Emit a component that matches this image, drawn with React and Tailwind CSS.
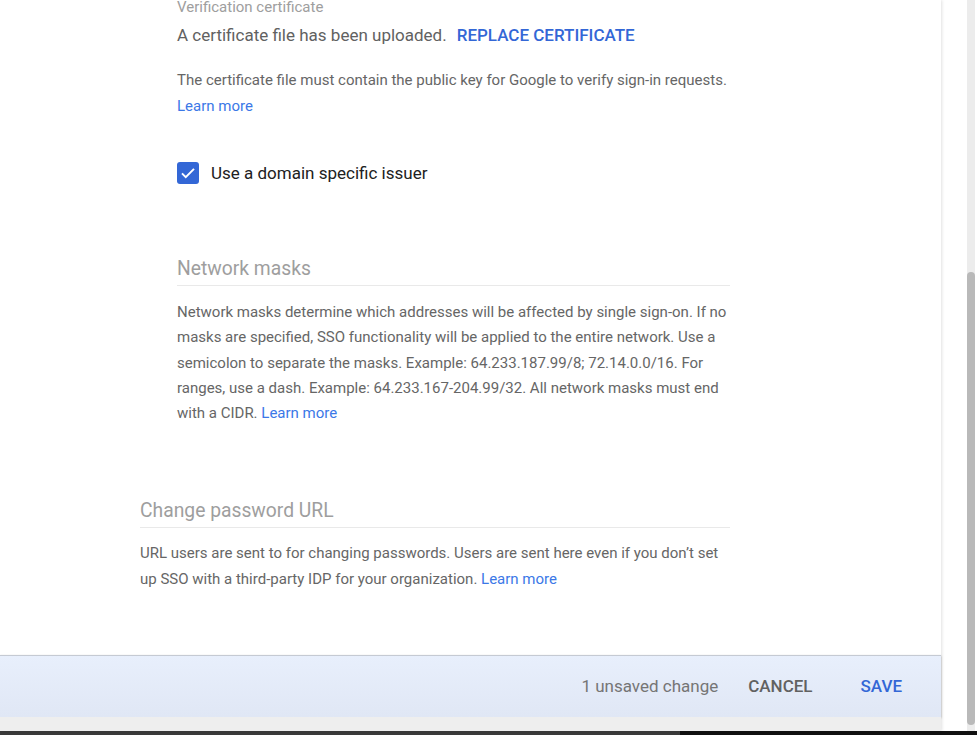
export default function App() {
	return (
		<div className="w-[977px] h-[735px] overflow-hidden bg-white flex flex-col font-['Roboto',sans-serif]">
			<div className="flex flex-1 min-h-0">
				{/* Settings card */}
				<div className="w-[941px] flex flex-col shadow-[1px_0_3px_rgba(0,0,0,0.12)] z-10">
					<div className="flex-1 min-h-0 pl-[140px]">
						<div className="w-[590px]">
							<div className="pl-[37px]">
								<div className="mt-[-3px] text-[15px] leading-[20px] text-[#9e9e9e]">Verification certificate</div>
								<div className="mt-[6px] text-[17px] leading-[24px] text-[#616161]">
									A certificate file has been uploaded.
									<span className="ml-[10px] font-medium text-[#3367d6]">REPLACE CERTIFICATE</span>
								</div>
								<p className="mt-[20px] text-[15px] leading-[26px] text-[#666666]">
									The certificate file must contain the public key for Google to verify sign-in requests.
									<br />
									<span className="text-[#3b78e7]">Learn more</span>
								</p>

								<div className="mt-[42px] flex items-center gap-[12px]">
									<div className="w-[22px] h-[22px] rounded-[3px] bg-[#3367d6] flex items-center justify-center">
										<svg width="18" height="18" viewBox="0 0 24 24" fill="none">
											<path d="M4 12.5l5 5L20 6.5" stroke="white" strokeWidth="2.6" />
										</svg>
									</div>
									<span className="text-[17px] leading-[24px] text-[#212121]">Use a domain specific issuer</span>
								</div>

								{/* Network masks */}
								<div className="mt-[72px] pb-[4px] border-b border-[#e9e9e9] text-[19.3px] leading-[24px] text-[#9e9e9e]">
									Network masks
								</div>
								<p className="mt-[14px] text-[15px] leading-[25.3px] text-[#666666]">
									Network masks determine which addresses will be affected by single sign-on. If no masks are
									specified, SSO functionality will be applied to the entire network. Use a semicolon to separate
									the masks. Example: 64.233.187.99/8; 72.14.0.0/16. For ranges, use a dash. Example:
									64.233.167-204.99/32. All network masks must end with a CIDR.{" "}
									<span className="text-[#3b78e7]">Learn more</span>
								</p>
							</div>

							{/* Change password URL */}
							<div className="mt-[73px] pb-[4px] border-b border-[#e9e9e9] text-[19.3px] leading-[24px] text-[#9e9e9e]">
								Change password URL
							</div>
							<p className="mt-[12px] text-[15px] leading-[26px] text-[#666666]">
								URL users are sent to for changing passwords. Users are sent here even if you don’t set up SSO
								with a third-party IDP for your organization.{" "}
								<span className="text-[#3b78e7]">Learn more</span>
							</p>
						</div>
					</div>

					{/* Unsaved changes bar */}
					<div className="h-[62px] shrink-0 border-t border-[#c5cad3] bg-gradient-to-b from-[#e8effc] to-[#e0e7f5] shadow-[0_1px_2px_rgba(0,0,0,0.35)] flex items-center justify-end pr-[39px]">
						<span className="text-[17px] text-[#757575]">1 unsaved change</span>
						<span className="ml-[30px] text-[17px] font-medium text-[#616161]">CANCEL</span>
						<span className="ml-[48px] text-[17px] font-medium text-[#3367d6]">SAVE</span>
					</div>
					<div className="h-[14px] shrink-0 bg-[#eeeeee]" />
				</div>

				{/* Gutter + scrollbar */}
				<div className="flex-1 flex">
					<div className="w-[26px]" />
					<div className="w-[8px] bg-[#ececec] flex flex-col">
						<div className="h-[272px]" />
						<div className="flex-1 mb-[6px] rounded-[4px] bg-[#b9b9b9]" />
					</div>
				</div>
			</div>

			<div className="h-[4px] shrink-0 flex">
				<div className="w-[680px] bg-[#3a3a3a]" />
				<div className="flex-1 bg-[#111111]" />
			</div>
		</div>
	);
}
